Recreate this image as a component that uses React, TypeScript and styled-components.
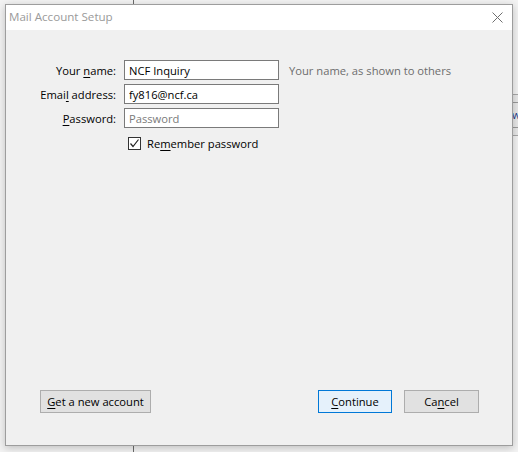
import React, { FC, useState } from 'react';
import styled, { createGlobalStyle } from 'styled-components';

const GlobalStyle = createGlobalStyle`
  html, body {
    margin: 0;
    padding: 0;
  }
  body {
    font-family: "Open Sans", "Noto Sans", "Liberation Sans", sans-serif;
    font-size: 11.2px;
    color: #000;
  }
`;

// main window peeking out behind the dialog
const Screen = styled.div`
  position: relative;
  width: 518px;
  height: 452px;
  overflow: hidden;
  background:
    linear-gradient(to right, transparent 133px, #6b6b6b 133px, #6b6b6b 134px, transparent 134px),
    #f3f3f3;
`;

const SidePane = styled.div`
  position: absolute;
  top: 94px;
  left: 511px;
  width: 20px;
  height: 40px;
  background: #e8e8e8;
  border-top: 1px solid #a8a8a8;
  border-bottom: 1px solid #a8a8a8;
  display: flex;
  flex-direction: column;
  justify-content: center;
  gap: 6px;
`;

const SideRule = styled.div`
  height: 1px;
  background: #9a9a9a;
`;

const SideText = styled.span`
  font-size: 11px;
  color: #1c3b8a;
  padding-left: 1px;
  line-height: 12px;
`;

const Window = styled.div`
  position: absolute;
  left: 5px;
  top: 4px;
  width: 506px;
  height: 440px;
  border: 1px solid #9d9d9d;
  box-shadow: 0 2px 8px rgba(0, 0, 0, 0.22);
  display: flex;
  flex-direction: column;
  background: #f0f0f0;
`;

const TitleBar = styled.div`
  height: 25px;
  flex: none;
  background: #fff;
  display: flex;
  align-items: center;
  justify-content: space-between;
  padding: 0 0 0 3px;
`;

const Title = styled.span`
  font-size: 11.6px;
  color: #9a9a9a;
  margin-top: -2px;
`;

const CloseButton = styled.button`
  width: 34px;
  height: 25px;
  border: none;
  background: transparent;
  display: flex;
  align-items: center;
  justify-content: center;
  padding: 0;
  margin-right: -2px;
  margin-top: 0;
`;

const Body = styled.div`
  flex: 1;
  display: flex;
  flex-direction: column;
  padding: 30px 33px 32px 0;
`;

const Form = styled.div`
  display: grid;
  grid-template-columns: 110px 155px 1fr;
  grid-auto-rows: 20px;
  column-gap: 8px;
  row-gap: 4px;
  align-items: center;
`;

const Label = styled.label`
  text-align: right;
  white-space: nowrap;
`;

const Key = styled.span`
  text-decoration: underline;
  text-underline-offset: 2px;
`;

const TextInput = styled.input`
  box-sizing: border-box;
  width: 155px;
  height: 20px;
  border: 1px solid #7a7a7a;
  background: #fff;
  padding: 0 4px;
  font: inherit;
  color: #000;
  outline: none;
  &::placeholder {
    color: #7a7a7a;
  }
`;

const Hint = styled.span`
  color: #6d6d6d;
  margin-left: 2px;
  white-space: nowrap;
`;

const CheckRow = styled.label`
  grid-column: 2 / 4;
  display: flex;
  align-items: center;
  gap: 6px;
  margin-top: 3px;
  padding-left: 4px;
`;

const Box = styled.span`
  box-sizing: border-box;
  width: 13px;
  height: 13px;
  border: 1px solid #333;
  background: #fff;
  display: flex;
  align-items: center;
  justify-content: center;
`;

const Spacer = styled.div`
  flex: 1;
`;

const ButtonRow = styled.div`
  display: flex;
  align-items: center;
  padding-left: 34px;
  gap: 12px;
`;

const Button = styled.button<{ $primary?: boolean; $width: number }>`
  box-sizing: border-box;
  width: ${(p) => p.$width}px;
  height: 23px;
  border: 1px solid ${(p) => (p.$primary ? '#0078d7' : '#adadad')};
  background: ${(p) => (p.$primary ? '#e5f1fb' : '#e1e1e1')};
  font: inherit;
  color: #000;
  padding: 0;
  &:first-child {
    margin-right: auto;
  }
`;

const App: FC = () => {
  const [name, setName] = useState('NCF Inquiry');
  const [email, setEmail] = useState('fy816@ncf.ca');
  const [password, setPassword] = useState('');
  const [remember, setRemember] = useState(true);

  return (
    <>
      <GlobalStyle />
      <Screen>
        <SidePane>
          <SideRule />
          <SideText>w</SideText>
          <SideRule />
        </SidePane>
        <Window>
          <TitleBar>
            <Title>Mail Account Setup</Title>
            <CloseButton aria-label="Close">
              <svg width="11" height="11" viewBox="0 0 11 11">
                <path d="M0.5 0.5 L10.5 10.5 M10.5 0.5 L0.5 10.5" stroke="#6f6f6f" strokeWidth="1" fill="none" />
              </svg>
            </CloseButton>
          </TitleBar>
          <Body>
            <Form>
              <Label>Your <Key>n</Key>ame:</Label>
              <TextInput value={name} onChange={(e) => setName(e.target.value)} />
              <Hint>Your name, as shown to others</Hint>

              <Label>Emai<Key>l</Key> address:</Label>
              <TextInput value={email} onChange={(e) => setEmail(e.target.value)} />
              <span />

              <Label><Key>P</Key>assword:</Label>
              <TextInput
                type="password"
                placeholder="Password"
                value={password}
                onChange={(e) => setPassword(e.target.value)}
              />
              <span />

              <CheckRow onClick={() => setRemember(!remember)}>
                <Box>
                  {remember && (
                    <svg width="11" height="11" viewBox="0 0 11 11">
                      <path d="M1.5 5.5 L4 8.5 L9.5 1.5" stroke="#222" strokeWidth="1.2" fill="none" />
                    </svg>
                  )}
                </Box>
                <span>Re<Key>m</Key>ember password</span>
              </CheckRow>
            </Form>
            <Spacer />
            <ButtonRow>
              <Button $width={111}><Key>G</Key>et a new account</Button>
              <Button $primary $width={74}><Key>C</Key>ontinue</Button>
              <Button $width={75}>Ca<Key>n</Key>cel</Button>
            </ButtonRow>
          </Body>
        </Window>
      </Screen>
    </>
  );
};

export default App;
